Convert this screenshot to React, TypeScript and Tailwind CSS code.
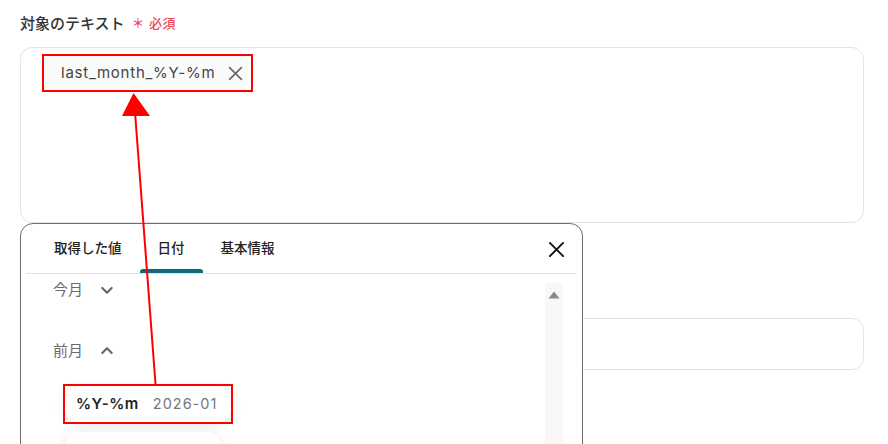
import React from 'react';

const font = { fontFamily: 'Inter, "Noto Sans CJK JP", sans-serif' };

const tabs = [
	{ name: '取得した値', current: false },
	{ name: '日付', current: true },
	{ name: '基本情報', current: false },
];

const ChevronDown = () => (
	<svg width="16" height="16" viewBox="0 0 24 24" fill="none" stroke="#666" strokeWidth="3.2" strokeLinecap="round" strokeLinejoin="round">
		<path d="M5 9l7 7 7-7" />
	</svg>
);

const ChevronUp = () => (
	<svg width="16" height="16" viewBox="0 0 24 24" fill="none" stroke="#666" strokeWidth="3.2" strokeLinecap="round" strokeLinejoin="round">
		<path d="M5 15l7-7 7 7" />
	</svg>
);

export default function App() {
	return (
		<div className="relative h-[444px] w-[888px] overflow-hidden bg-white" style={font}>
			<div className="pl-[20px] pr-[24px] pt-[13px]">
				{/* Label */}
				<div className="flex items-center gap-[7px] h-[22px]">
					<span className="text-[15px] text-[#333] font-medium">対象のテキスト</span>
					<span className="text-[13px] text-[#ec4b5b] font-medium tracking-[0.5px]">＊ 必須</span>
				</div>

				{/* Textarea */}
				<div className="mt-[12px] h-[176px] rounded-[12px] border border-[#e3e3e8] pl-[23px] pt-[8px]">
					<div className="inline-flex h-[34px] items-center gap-[13px] rounded-[10px] bg-[#fafafb] pl-[17px] pr-[6px] shadow-[0_0_3px_rgba(0,0,0,0.05)]">
						<span className="text-[15px] text-[#444] tracking-[0.75px]">last_month_%Y-%m</span>
						<svg width="15" height="15" viewBox="0 0 14 14" stroke="#666" strokeWidth="1.5" strokeLinecap="round">
							<path d="M1.5 1.5l11 11M12.5 1.5l-11 11" />
						</svg>
					</div>
				</div>

				{/* Field behind the popup */}
				<div className="mt-[95px] h-[52px] rounded-[12px] border border-[#e3e3e8]" />
			</div>

			{/* Popup */}
			<div className="absolute left-[20px] top-[223px] h-[260px] w-[563px] rounded-t-[13px] border border-[#6e6e6e] bg-white">
				<div className="mx-[5px] flex h-[50px] items-end border-b border-[#e4e4e8] pl-[10px]">
					{tabs.map((tab) => (
						<div key={tab.name} className="relative flex h-[50px] items-center px-[18px]">
							<span className="text-[13.5px] font-medium text-[#222]">{tab.name}</span>
							{tab.current && <div className="absolute bottom-0 left-0 right-0 h-[4px] rounded-t-[3px] bg-[#0f687d]" />}
						</div>
					))}
					<div className="flex-1" />
					<div className="mb-[15px] mr-[12px]">
						<svg width="17" height="17" viewBox="0 0 18 18" stroke="#111" strokeWidth="2" strokeLinecap="round">
							<path d="M2 2l14 14M16 2L2 16" />
						</svg>
					</div>
				</div>

				<div className="flex">
					<div className="flex-1 pl-[32px]">
						<div className="mt-[5px] flex h-[22px] items-center gap-[16px] text-[15px] text-[#6b6b6b]">
							<span>今月</span>
							<ChevronDown />
						</div>
						<div className="mt-[39px] flex h-[22px] items-center gap-[16px] text-[15px] text-[#6b6b6b]">
							<span>前月</span>
							<ChevronUp />
						</div>
						<div className="ml-[12px] mt-[24px] flex h-[36px] w-[166px] items-center gap-[14px] rounded-[14px] bg-white pl-[11px] shadow-[0_2px_12px_rgba(0,0,0,0.1)]">
							<span className="text-[15px] font-semibold text-[#222] tracking-[0.5px]">%Y-%m</span>
							<span className="text-[14.5px] text-[#777] tracking-[1px]">2026-01</span>
						</div>
						<div className="ml-[12px] mt-[10px] h-[36px] w-[156px] rounded-[14px] bg-white shadow-[0_2px_12px_rgba(0,0,0,0.1)]" />
					</div>
					<div className="mr-[19px] mt-[9px] h-[200px] w-[18px] bg-[#f8f8f8] pt-[8px]">
						<svg className="mx-auto" width="12" height="8" viewBox="0 0 12 8">
							<path d="M6 0.5L11.5 7.5H0.5z" fill="#888" />
						</svg>
					</div>
				</div>
			</div>

			{/* Annotations */}
			<div className="pointer-events-none absolute left-[42px] top-[54px] h-[38px] w-[211px] border-2 border-[#ff0000]" />
			<div className="pointer-events-none absolute left-[63px] top-[384px] h-[40px] w-[170px] border-2 border-[#ff0000]" />
			<svg className="pointer-events-none absolute left-0 top-0" width="888" height="444">
				<line x1="155.5" y1="384" x2="135" y2="112" stroke="#ff0000" strokeWidth="2" />
				<path d="M133.5 93L150 116L122 116z" fill="#ff0000" />
			</svg>
		</div>
	);
}
